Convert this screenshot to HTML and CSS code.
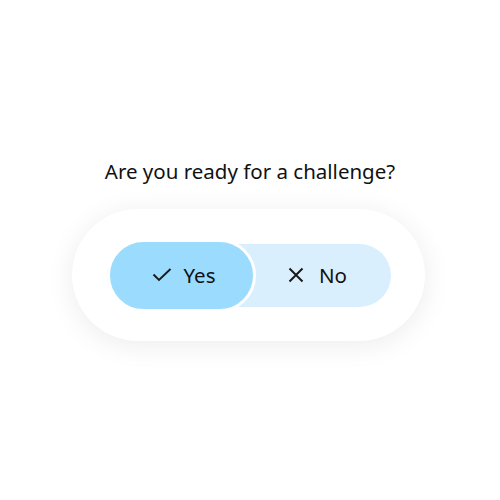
FILE: index.html
```html
<!DOCTYPE html>
<html>
<head>
<meta charset="utf-8">
<link rel="stylesheet" href="styles.css">
</head>
<body>
<main class="page">
  <h1 class="question">Are you ready for a challenge?</h1>
  <div class="card">
    <div class="choice-group">
      <button class="choice choice-yes">
        <svg class="icon icon-check" width="20" height="14" viewBox="0 0 20 14"><path d="M1.5 6.5 L7 12 L18.5 1" fill="none" stroke="#1a1a1a" stroke-width="1.9"/></svg>
        <span>Yes</span>
      </button>
      <button class="choice choice-no">
        <svg class="icon icon-x" width="16" height="16" viewBox="0 0 16 16"><path d="M1.5 1.5 L14.5 14.5 M14.5 1.5 L1.5 14.5" fill="none" stroke="#1a1a1a" stroke-width="2"/></svg>
        <span>No</span>
      </button>
    </div>
  </div>
</main>
</body>
</html>
```

FILE: styles.css
```css
html, body {
  margin: 0;
  padding: 0;
  background: #ffffff;
}
.page {
  width: 500px;
  height: 500px;
  display: flex;
  flex-direction: column;
  align-items: center;
  justify-content: center;
  font-family: "Noto Sans", "Open Sans", sans-serif;
  color: #111111;
}
.question {
  margin: 0 0 26px 0;
  font-size: 20.5px;
  font-weight: 400;
  line-height: 24px;
}
.card {
  box-sizing: border-box;
  width: 353px;
  height: 132px;
  margin-left: -3px;
  padding: 0 34px 0 35px;
  display: flex;
  align-items: center;
  background: #ffffff;
  border-radius: 66px;
  box-shadow: 0 4px 28px rgba(0, 0, 0, 0.08);
}
.choice-group {
  flex: 1;
  height: 63px;
  display: flex;
  align-items: center;
  background: #d9effd;
  border-radius: 32px;
}
.choice {
  display: flex;
  align-items: center;
  justify-content: center;
  gap: 12px;
  font-family: inherit;
  font-size: 20.5px;
  color: #111111;
  border: none;
  background: transparent;
  padding: 0;
  cursor: pointer;
}
.choice-yes {
  width: 149px;
  height: 73px;
  box-sizing: border-box;
  border: 3px solid #ffffff;
  border-radius: 37px;
  background: #9bdbfd;
  padding-left: 4px;
}
.choice-no {
  flex: 1;
  height: 63px;
  padding-right: 12px;
  gap: 15px;
}
.icon {
  display: block;
}
```
